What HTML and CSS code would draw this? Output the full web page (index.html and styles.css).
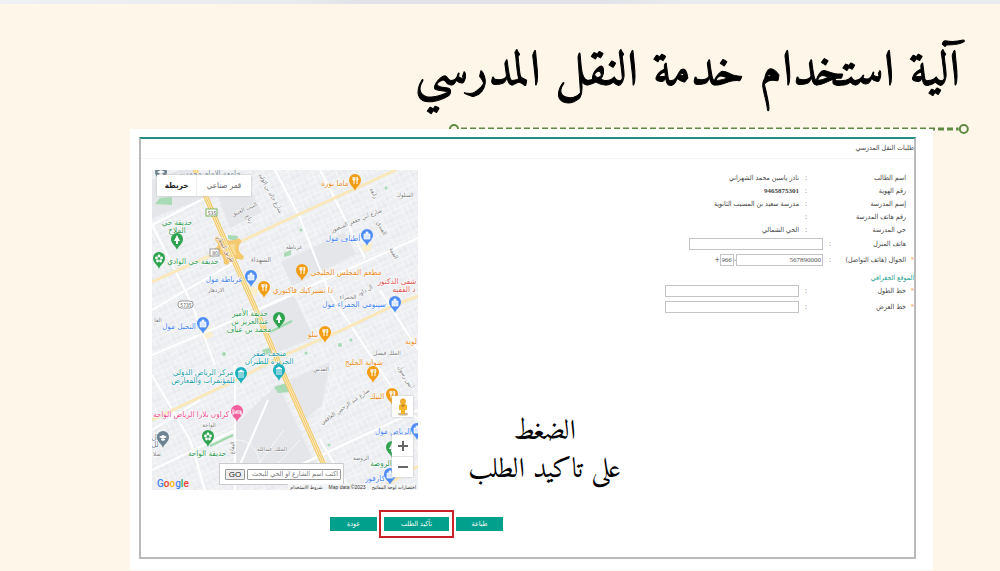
FILE: index.html
```html
<!DOCTYPE html>
<html lang="ar" dir="rtl">
<head>
<meta charset="utf-8">
<title>آلية استخدام خدمة النقل المدرسي</title>
<link rel="stylesheet" href="styles.css">
</head>
<body>
<div class="topbar"></div>
<header class="slide-header">
  <h1>آلية استخدام خدمة النقل المدرسي</h1>
  <svg class="rule" height="12" aria-hidden="true">
    <line x1="12" y1="6" x2="98%" y2="6" stroke="#5f8a43" stroke-width="3" stroke-dasharray="6 3"/>
    <circle cx="5" cy="6" r="4" fill="#fff6ea" stroke="#5f8a43" stroke-width="2"/>
    <circle cx="99%" cy="6" r="4" fill="#fff6ea" stroke="#5f8a43" stroke-width="2"/>
  </svg>
</header>
<main class="sheet">
  <section class="panel">
    <h2 class="panel-title">طلبات النقل المدرسي</h2>
    <div class="content">
      <form class="details">
        <div class="row"><span class="star"></span><span class="label">اسم الطالب</span><span class="colon">:</span><span class="value">نادر ياسين محمد الشهراني</span></div>
        <div class="row"><span class="star"></span><span class="label">رقم الهوية</span><span class="colon">:</span><span class="value number">9465875301</span></div>
        <div class="row"><span class="star"></span><span class="label">إسم المدرسة</span><span class="colon">:</span><span class="value">مدرسة سعيد بن المسيب الثانوية</span></div>
        <div class="row"><span class="star"></span><span class="label">رقم هاتف المدرسة</span><span class="colon">:</span><span class="value"></span></div>
        <div class="row"><span class="star"></span><span class="label">حي المدرسة</span><span class="colon">:</span><span class="value">الحي الشمالي</span></div>
        <div class="row tall phone"><span class="star"></span><label class="label" for="home">هاتف المنزل</label><span class="colon">:</span><input id="home" class="field" type="text"></div>
        <div class="row tall phone"><span class="star">*</span><label class="label" for="mobile">الجوال (هاتف التواصل)</label><span class="colon">:</span><input id="mobile" class="field mobile" type="text" value="567890000"><span class="sign">-</span><input class="field code" type="text" value="966" aria-label="رمز الدولة"><span class="sign">+</span></div>
        <h3>الموقع الجغرافي</h3>
        <div class="row tall"><span class="star">*</span><label class="label" for="lng">خط الطول</label><span class="colon">:</span><input id="lng" class="field" type="text"></div>
        <div class="row tall"><span class="star">*</span><label class="label" for="lat">خط العرض</label><span class="colon">:</span><input id="lat" class="field" type="text"></div>
      </form>
      <p class="caption">الضغط<br>على تاكيد الطلب</p>
      <div class="map">
        <svg class="map-art" viewBox="152 170 266 320" preserveAspectRatio="xMidYMid slice">
          <defs>
            <pattern id="streets" width="22" height="16" patternUnits="userSpaceOnUse" patternTransform="rotate(-25)">
              <rect width="22" height="16" fill="#eceef1"/>
              <path d="M0 0H22M0 5H22M0 10H12M0 0V16M6 0V5M12 0V16M17 5V16" stroke="#f7f8fa" stroke-width="1" fill="none"/>
              <path d="M3 5V10M12 13H22" stroke="#e4e6e9" stroke-width="1" fill="none"/>
            </pattern>
            <path id="pin" d="M0 10C-1 6-6 4-6-1A6 6 0 0 1 6-1C6 4 1 6 0 10Z"/>
            <g id="food"><use href="#pin" fill="#f29d16"/><path d="M-2-4V-1M-1-4V3M0-4V-1M-2-1H0M2-4V3M2-4Q4-2 2 0" stroke="#fff" fill="none"/></g>
            <g id="shop"><use href="#pin" fill="#4e8df5"/><path d="M-3-2H3V3H-3ZM-1-2V-4H1V-2" fill="#d9e8ff" stroke="#fff" stroke-width=".7"/></g>
            <g id="park"><use href="#pin" fill="#2fa350"/><path d="M0-5L3 1H1V4H-1V1H-3Z" fill="#fff"/></g>
            <g id="flower"><use href="#pin" fill="#2fa350"/><g fill="#fff"><circle cy="-3" r="1.4"/><circle cx="-2.5" cy="-1" r="1.4"/><circle cx="2.5" cy="-1" r="1.4"/><circle cx="-1.5" cy="2" r="1.4"/><circle cx="1.5" cy="2" r="1.4"/></g></g>
            <g id="museum"><use href="#pin" fill="#1fb0bf"/><path d="M-3-2L0-4L3-2ZM-2-1V2M0-1V2M2-1V2M-3 3H3" stroke="#fff" fill="#fff" stroke-width=".9"/></g>
            <g id="hotel"><use href="#pin" fill="#f0609c"/><path d="M-4-3V3M-4 1H4V3M4 1V-1H-1V1M-3-1H-2" stroke="#fff" fill="none"/></g>
            <g id="school"><use href="#pin" fill="#6d8391"/><path d="M-4-1L0-3L4-1L0 1ZM-2 1V2L0 3L2 2V1" fill="#fff"/></g>
          </defs>
          <rect x="152" y="170" width="266" height="320" fill="url(#streets)"/>
          <g fill="#e4e6ea">
            <path d="M281 262L345 232L356 254L292 286ZM258 312L294 296L314 338L278 352ZM236 424L278 384L318 470L235 465ZM290 380L330 362L322 405L304 420ZM152 180L180 170H196L207 197L152 218ZM212 180L240 172L262 212L230 228Z"/>
          </g>
          <path d="M320 420L336 366M326 424L345 370M254 470L284 430M262 480L300 440M195 470Q215 440 236 440T262 470" stroke="#f6f7f9" fill="none"/>
          <g fill="#a8dbb5">
            <path d="M160 198L172 197V205L155 204ZM284 253L291 250V255L284 257ZM274 387L289 382L290 392L278 393ZM228 235L238 236L237 241L228 239ZM262 350L272 347L275 353L265 355Z"/>
            <circle cx="386" cy="188" r="1.5"/><circle cx="301" cy="230" r="1.5"/><circle cx="224" cy="354" r="2"/><circle cx="340" cy="345" r="2"/><circle cx="351" cy="340" r="1.5"/><circle cx="329" cy="445" r="1.5"/><circle cx="306" cy="353" r="1.5"/>
          </g>
          <path d="M200 330L209 326L213 336L204 340ZM362 245L372 243L371 250L364 252ZM248 284L258 290L256 297L250 292Z" fill="#fbefcb"/>
          <g stroke="#fff" stroke-width="2" fill="none">
            <path d="M320 170L365 258M326 288L400 400L418 420M380 290L418 350M152 355L262 308L418 238M152 225L250 175M152 225L190 300L215 365M268 400L240 465M275 170L300 218L328 290M152 470L235 430M152 310L235 262M152 375L190 440L205 490M320 440L350 490M300 465L418 410M200 400L152 430M235 365V490"/>
          </g>
          <g stroke="#fae8ba" stroke-width="3" fill="none">
            <path d="M396 170L280 223L227 248L152 282M418 296L395 305L340 331L280 357L240 378L152 420M418 466L378 490"/>
          </g>
          <path d="M216 238Q228 246 240 240Q232 250 243 258Q230 254 226 264Q226 252 216 250Q224 246 216 238Z" fill="#f9dc98" stroke="#f5c970" stroke-width="4"/>
          <path d="M195 170L206 197L226 243L253 303L283 373L335 490" stroke="#f2c868" stroke-width="5" fill="none"/>
          <path d="M195 170L206 197L226 243L253 303L283 373L335 490" stroke="#fdeabb" stroke-width="3" fill="none"/>
          <path d="M195 170L206 197L226 243L253 303L283 373L335 490" stroke="#f2c868" stroke-width="1" fill="none"/>
          <path d="M210 446L233 435M270 332L292 321" stroke="#9ed9ab" stroke-width="2"/>
          <g class="street">
            <text x="261" y="262" class="area">الشهداء</text><text x="294" y="249">غرناطة</text><text x="216" y="292">الازدهار</text>
            <text transform="translate(357 222) rotate(-22)">شارع أبي جعفر المنصور</text>
            <text transform="translate(372 194) rotate(62)">رابعة</text><text transform="translate(380 229) rotate(62)">الفندق</text><text transform="translate(392 254) rotate(62)">القمة</text>
            <text x="405" y="197">السلوك</text><text transform="translate(245 211) rotate(-24)">البيت العتيق</text>
            <text transform="translate(269 194) rotate(62)">شارع خالد بن الوليد</text><text transform="translate(248 220) rotate(55)">رباع</text>
            <text transform="translate(224 250) rotate(60)" class="brown">طريق المطار</text>
            <text x="348" y="299">الحمراء</text><text transform="translate(366 292) rotate(-28)">آل داود</text><text x="387" y="355">الملك فيصل</text>
            <text x="321" y="371">القدس</text><text transform="translate(346 408) rotate(-35)">شارع عبد الرحمن الغافقي</text>
            <text transform="translate(404 378) rotate(60)">أنس رسول</text><text x="361" y="460">الروضة</text><text x="209" y="427">الواحة</text><text x="272" y="451">الملك عبدالله</text>
            <text transform="translate(234 448) rotate(-85)">البقاع</text><text x="158" y="322">العا</text><text x="157" y="456">صلا</text>
          </g>
          <g class="place">
            <text x="208" y="176" fill="#6d8391">جامعة الإمام محمد بن</text><text x="155" y="440" fill="#6d8391">ال</text><text x="155" y="447" fill="#6d8391">لل</text>
            <g fill="#2e9950"><text x="177" y="225">حديقة حي</text><text x="177" y="233">الملاح</text><text x="193" y="264">حديقة حي الوادي</text>
            <text x="250" y="316">حديقة الأمير</text><text x="250" y="324">عبدالعزيز بن</text><text x="249" y="332">محمد بن عياف</text><text x="207" y="456">حديقة الواحة</text><text x="381" y="466">الروضة</text></g>
            <g fill="#e88b1f"><text x="335" y="186">ماما نورة</text><text x="346" y="275">مطعم المجلس الخليجي</text><text x="303" y="293">دا تشيزكيك فاكتوري</text><text x="313" y="337">نبلو</text><text x="364" y="365">شواية الخليج</text><text x="377" y="399">البيك</text><text x="411" y="344">لوية</text></g>
            <g fill="#4482ed"><text x="343" y="241">أطياف مول</text><text x="224" y="282">غرناطة مول</text><text x="354" y="307">سينومي الحمراء مول</text><text x="179" y="329">النخيل مول</text><text x="393" y="434">الرياض مول</text><text x="375" y="481">كارفور</text></g>
            <g fill="#e05555"><text x="397" y="284">شفى الدكتور</text><text x="404" y="292">د الفقيه</text></g>
            <g fill="#1a9bab"><text x="269" y="356">متحف صقر</text><text x="269" y="364">الجزيرة للطيران</text><text x="203" y="375">مركز الرياض الدولي</text><text x="203" y="383">للمؤتمرات والمعارض</text></g>
            <text x="191" y="417" fill="#e94b8b">كراون بلازا الرياض الواحة</text>
          </g>
          <use href="#school" x="161" y="173"/><use href="#school" x="163" y="438"/>
          <use href="#park" x="177" y="240"/><use href="#flower" x="159" y="259"/><use href="#park" x="279" y="319"/><use href="#flower" x="208" y="437"/><use href="#park" x="392" y="448"/>
          <use href="#food" x="355" y="181"/><use href="#food" x="302" y="271"/><use href="#food" x="264" y="288"/><use href="#food" x="325" y="333"/><use href="#food" x="373" y="373"/><use href="#food" x="392" y="395"/>
          <use href="#shop" x="367" y="236"/><use href="#shop" x="251" y="277"/><use href="#shop" x="395" y="303"/><use href="#shop" x="203" y="324"/><use href="#shop" x="417" y="430"/><use href="#shop" x="390" y="475"/>
          <use href="#museum" x="279" y="371"/><use href="#museum" x="241" y="374"/><use href="#hotel" x="237" y="412"/>
          <g class="shield"><rect x="206" y="209" width="11" height="7" class="green"/><text x="212" y="215">535</text><rect x="210" y="249" width="9" height="7"/><text x="215" y="255">80</text><rect x="178" y="301" width="15" height="7" rx="3"/><text x="186" y="307">5735</text></g>
        </svg>
        <div class="map-types"><button type="button" class="active">خريطة</button><button type="button">قمر صناعي</button></div>
        <button type="button" class="pegman" aria-label="التجوّل الافتراضي">
          <svg width="12" height="18" viewBox="0 0 12 18"><ellipse cx="6" cy="16" rx="5" ry="1.5" fill="#c9b590"/><path d="M2 7Q6 4 10 7V12H8V16H4V12H2Z" fill="#f5b52b"/><circle cx="6" cy="3.5" r="2.7" fill="#f3b02b" stroke="#d98d18" stroke-width=".5"/><path d="M4 7L6 9L8 7" fill="#b97a19"/></svg>
        </button>
        <div class="zoomer">
          <button type="button" aria-label="تكبير"><svg width="10" height="10" viewBox="0 0 10 10"><path d="M0 5H10M5 0V10" stroke="#666" stroke-width="2"/></svg></button>
          <button type="button" aria-label="تصغير"><svg width="10" height="10" viewBox="0 0 10 10"><path d="M0 5H10" stroke="#666" stroke-width="2"/></svg></button>
        </div>
        <div class="search"><input type="text" placeholder="اكتب اسم الشارع او الحي للبحث" aria-label="بحث"><button type="button">GO</button></div>
        <div class="google" dir="ltr"><span class="b">G</span><span class="r">o</span><span class="y">o</span><span class="b">g</span><span class="g">l</span><span class="r">e</span></div>
        <div class="credits"><span>اختصارات لوحة المفاتيح</span><span dir="ltr">Map data ©2023</span><span>شروط الاستخدام</span></div>
      </div>
    </div>
    <div class="actions">
      <button type="button" class="btn">طباعة</button>
      <div class="highlight"><button type="button" class="btn wide">تأكيد الطلب</button></div>
      <button type="button" class="btn">عودة</button>
    </div>
  </section>
</main>
</body>
</html>
```
FILE: styles.css
```css
* { box-sizing: border-box; }
body { margin: 0; background: #fff6ea; font-family: "DejaVu Sans Condensed", "DejaVu Sans", sans-serif; color: #444; }
button, input { font: inherit; margin: 0; }
.topbar { height: 4px; background: linear-gradient(90deg, #eef0f4, #e9eaf0 30%, #e2e3ea 36%, #e2e3ea 60%, #e9eaf0 68%); }
.slide-header { height: 125px; padding: 29px 40px 0 0; position: relative; }
h1 { margin: 0; font: 50px/80px "Amiri", "Scheherazade New", "DejaVu Sans Condensed", "DejaVu Sans", serif; color: #000; -webkit-text-stroke: 1px #000; white-space: nowrap; }
.rule { position: absolute; right: 31px; bottom: -6px; width: 52%; }
.sheet { position: relative; margin: 0 67px 0 130px; padding: 8px 17px 11px 9px; background: #fff; }
.panel { border: 2px solid #bababa; border-top-color: #218f86; padding-bottom: 19px; }
.panel-title { margin: 0; font-size: 7px; font-weight: normal; line-height: 19px; border-bottom: 1px solid #f4f4f4; }
.content { display: flex; padding: 11px 0 0 11px; }
.details { width: 249px; padding-top: 1px; font-size: 7px; }
.row { display: flex; align-items: center; height: 13px; }
.row.tall { height: 16px; }
.star { width: 8px; color: #f2a13c; }
.label { width: 96px; white-space: nowrap; }
.colon { width: 11px; padding-right: 3px; }
.value { white-space: nowrap; }
.number { font: bold 7px "Liberation Serif", serif; }
.phone .label { width: 72px; }
.field { width: 134px; height: 12px; padding: 0 1px; border: 1px solid #c4c4c4; background: #fff; font: 7px "Liberation Serif", serif; color: #555; }
.mobile { width: 87px; }
.code { width: 14px; }
h3 { margin: 5px 0 0; font-size: 7px; line-height: 10px; color: #16a08c; font-weight: normal; }
.caption { flex: 1; margin: 0; padding-left: 6px; align-self: flex-end; text-align: center; color: #000; font: 28px/38px "Amiri", "Scheherazade New", "DejaVu Sans Condensed", "DejaVu Sans", serif; position: relative; }
.map { position: relative; width: 266px; height: 320px; overflow: hidden; }
.map-art { display: block; width: 100%; height: 100%; }
.map-art text { text-anchor: middle; }
.place { font-size: 8px; }
.street { font-size: 6px; fill: #777; }
.street .area { font-size: 7px; }
.street .brown { fill: #9a6b35; }
.place text, .street text { paint-order: stroke; stroke: #fff; stroke-width: 1px; }
.shield rect { fill: #fff; stroke: #999; }
.shield .green { stroke: #7cb35e; }
.shield text { font-size: 5px; fill: #555; }
.map button { padding: 0; border: 0; background: #fff; color: #666; }
.map-types { position: absolute; left: 5px; top: 5px; display: flex; box-shadow: 0 0 2px #bbb; }
.map-types button { width: 54px; height: 21px; font-size: 8px; }
.map-types .active { order: 1; width: 40px; border-right: 1px solid #eee; font-weight: bold; color: #222; }
.map .pegman { position: absolute; right: 5px; top: 226px; display: grid; place-items: center; width: 21px; height: 21px; box-shadow: 0 0 2px #bbb; }
.zoomer { position: absolute; right: 5px; top: 265px; width: 21px; background: #fff; box-shadow: 0 0 2px #bbb; }
.zoomer button { display: grid; place-items: center; width: 21px; height: 21px; }
.zoomer button + button { border-top: 1px solid #e4e4e4; }
.search { position: absolute; left: 67px; bottom: 5px; display: flex; align-items: center; gap: 2px; width: 125px; height: 22px; padding: 0 2px 0 5px; background: #fff; border: 1px solid #ccc; }
.search input { flex: 1; min-width: 0; height: 11px; padding: 0 2px; border: 1px solid #999; border-radius: 1px; font-size: 7px; }
.search input::placeholder { color: #777; opacity: 1; }
.map .search button { width: 20px; height: 11px; border: 1px solid #999; border-radius: 1px; background: #eee; font: 8px/9px "Liberation Sans", sans-serif; color: #222; }
.google { position: absolute; left: 5px; bottom: 0; font: 500 10px/13px Roboto, sans-serif; }
.b { color: #4285f4; } .r { color: #ea4335; } .y { color: #fbbc05; } .g { color: #34a853; }
.credits { position: absolute; right: 0; bottom: 0; display: flex; gap: 6px; padding: 0 2px; background: #f3f4f5; font: 5px/6px "Liberation Sans", "DejaVu Sans Condensed", sans-serif; color: #333; white-space: nowrap; }
.actions { display: flex; justify-content: flex-end; align-items: center; gap: 2px; margin-top: 20px; padding-left: 189px; }
.btn { width: 47px; height: 14px; padding: 0; border: 0; background: #00a08c; color: #fff; font-size: 7px; }
.wide { display: block; width: 65px; }
.highlight { border: 2px solid #cc2027; padding: 5px 3px; }
```
